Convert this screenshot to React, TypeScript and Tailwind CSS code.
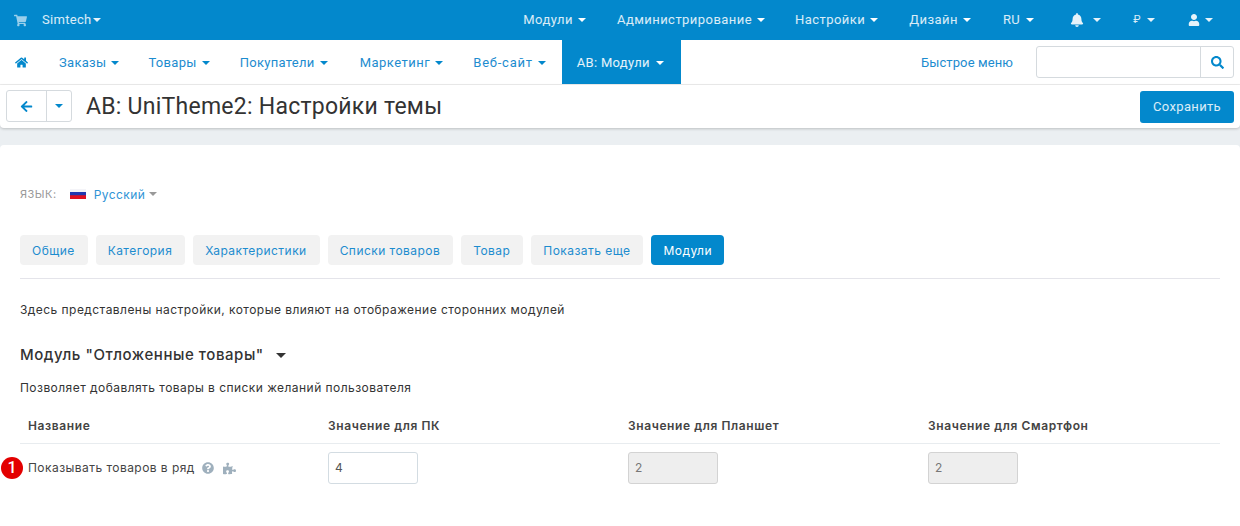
import { FaShoppingCart, FaHome, FaBell, FaUser, FaArrowLeft, FaSearch, FaQuestionCircle, FaPuzzlePiece } from 'react-icons/fa';

const Caret = ({ className = 'border-t-white' }: { className?: string }) => (
  <span className={`inline-block w-0 h-0 border-x-[4px] border-x-transparent border-t-[4px] ${className}`} />
);

const topItems = [
  { label: 'Модули', cls: 'gap-[5px]' },
  { label: 'Администрирование', cls: 'gap-[5px] ml-[31px]' },
  { label: 'Настройки', cls: 'gap-[5px] ml-[30px]' },
  { label: 'Дизайн', cls: 'gap-[5px] ml-[31px]' },
  { label: 'RU', cls: 'gap-[6px] ml-[32px]' },
];

const mainItems = [
  { label: 'Заказы', cls: 'ml-[31px]' },
  { label: 'Товары', cls: 'ml-[29px]' },
  { label: 'Покупатели', cls: 'ml-[30px]' },
  { label: 'Маркетинг', cls: 'ml-[32px] tracking-[0.5px]' },
  { label: 'Веб-сайт', cls: 'ml-[30px] tracking-[0.75px]' },
];
const tabs = ['Общие', 'Категория', 'Характеристики', 'Списки товаров', 'Товар', 'Показать еще'];
const columns = ['Значение для ПК', 'Значение для Планшет', 'Значение для Смартфон'];

export default function App() {
  return (
    <div className="w-[1240px] h-[526px] overflow-hidden bg-[#ebeff2] font-['Roboto',sans-serif]">
      {/* Top bar */}
      <div className="h-10 bg-[#0388cc] flex items-center text-[13px] text-white/85">
        <FaShoppingCart className="ml-[14px] text-[13px] text-white/60" />
        <span className="ml-[15px] tracking-[0.3px]">Simtech</span>
        <Caret className="border-t-white/90 ml-[1px]" />
        <div className="ml-auto flex items-center tracking-[0.45px]">
          {topItems.map(item => (
            <div key={item.label} className={`flex items-center ${item.cls}`}>
              {item.label}
              <Caret />
            </div>
          ))}
          <FaBell className="ml-[36px] text-[14px] text-white/90" />
          <Caret className="border-t-white/90 ml-[9px]" />
          <span className="ml-[32px] text-[11px]">₽</span>
          <Caret className="border-t-white/90 ml-[6px]" />
          <FaUser className="ml-[33px] text-[12px] text-white/90" />
          <Caret className="border-t-white/90 ml-[5px] mr-[27px]" />
        </div>
      </div>

      {/* Main nav */}
      <div className="h-[45px] bg-white border-b border-[#eeeeee] flex items-start text-[13px] text-[#1d8ccf] tracking-[0.3px]">
        <div className="h-11 pt-px flex items-center">
          <FaHome className="ml-[15px] text-[13px] text-[#0388cc]" />
          {mainItems.map(item => (
            <div key={item.label} className={`flex items-center gap-[5px] ${item.cls}`}>
              {item.label}
              <Caret className="border-t-[#0388cc]" />
            </div>
          ))}
        </div>
        <div className="ml-[16px] h-11 pt-px w-[119px] pl-[15px] bg-[#0388cc] text-white/90 flex items-center gap-[6px]">
          АВ: Модули
          <Caret />
        </div>
        <div className="ml-auto h-11 flex items-center pr-[6px]">
          <span className="pt-px tracking-[0.1px]">Быстрое меню</span>
          <div className="ml-[23px] w-[198px] h-8 border border-[#d5dade] rounded-[3px] flex justify-end">
            <div className="w-[33px] border-l border-[#d5dade] flex items-center justify-center">
              <FaSearch className="text-[13px] text-[#0388cc]" />
            </div>
          </div>
        </div>
      </div>

      {/* Title bar */}
      <div className="h-[43px] bg-white rounded-b-[4px] shadow-[0_1px_3px_rgba(0,0,0,0.2)] flex items-start pl-[6px] pr-[6px] relative">
        <div className="mt-[5px] h-8 w-[66px] flex border border-[#d5dade] rounded-[3px]">
          <div className="w-10 border-r border-[#d5dade] flex items-center justify-center">
            <FaArrowLeft className="text-[13px] text-[#0388cc]" />
          </div>
          <div className="flex-1 flex items-center justify-center">
            <Caret className="border-t-[#0388cc]" />
          </div>
        </div>
        <h1 className="ml-[14px] mt-[7px] text-[23px] leading-[30px] text-[#333] tracking-[0.25px]">
          AB: UniTheme2: Настройки темы
        </h1>
        <button className="ml-auto mt-[6px] w-[94px] h-8 bg-[#0388cc] rounded-[3px] text-[13px] text-white/85 tracking-[0.35px]">
          Сохранить
        </button>
      </div>

      {/* Content */}
      <div className="mt-[17px] h-[381px] bg-white rounded-t-[4px] px-5 font-['Inter',sans-serif] text-xs tracking-[0.45px] overflow-hidden">
        <div className="pt-[42px] h-[90px] flex items-start leading-[15px]">
          <span className="text-[#999] text-[11px] tracking-[0.5px]">ЯЗЫК:</span>
          <span className="ml-[13px] mt-[2px] w-4 h-[10px] bg-[linear-gradient(#f4f4f8_0%,#f4f4f8_30%,#2238b0_34%,#2238b0_62%,#e01020_66%,#e01020_100%)]" />
          <span className="ml-2 text-[#2f94d6]">Русский</span>
          <Caret className="border-t-[#999] ml-[4px] mt-[5px]" />
        </div>

        <div className="flex gap-2 pb-[13px] border-b border-[#e4e4ea]">
          {tabs.map(t => (
            <div key={t} className="h-[30px] pl-3 pr-[13px] pt-px flex items-center bg-[#f2f2f2] rounded-[4px] text-[#1d8ccf]">
              {t}
            </div>
          ))}
          <div className="h-[30px] px-3 pt-px flex items-center bg-[#0388cc] rounded-[4px] text-white">Модули</div>
        </div>

        <p className="mt-[22px] leading-[18px] text-[#333]">
          Здесь представлены настройки, которые влияют на отображение сторонних модулей
        </p>

        <div className="mt-[26px] flex items-center text-[15px] tracking-[0.55px] leading-5 font-medium text-[#333]">
          Модуль "Отложенные товары"
          <Caret className="border-t-[#333] ml-[12px] border-x-[5px] border-t-[5px]" />
        </div>

        <p className="mt-[14px] leading-[18px] text-[#333]">
          Позволяет добавлять товары в списки желаний пользователя
        </p>

        <div className="mt-[13px] grid grid-cols-[300px_300px_300px_300px] h-[34px] border-b border-[#e8ecef] font-semibold tracking-[0.6px] text-[#444] pl-2 items-start pt-[7px] leading-[18px]">
          <span>Название</span>
          {columns.map(c => (
            <span key={c}>{c}</span>
          ))}
        </div>

        <div className="grid grid-cols-[300px_300px_300px_300px] pl-2 mt-2 text-[#444] relative">
          <div className="absolute -left-[19px] top-[5px] w-[22px] h-[22px] rounded-full bg-[#e30000] text-white text-[16px] leading-[22px] text-center tracking-normal font-['Roboto',sans-serif] font-medium">
            1
          </div>
          <div className="flex items-center h-8">
            Показывать товаров в ряд
            <FaQuestionCircle className="ml-[7px] text-[12px] text-[#9fb0bd]" />
            <FaPuzzlePiece className="ml-[9px] text-[13px] text-[#9fb0bd]" />
          </div>
          <div className="w-[90px] h-8 border border-[#d3dce2] rounded-[3px] flex items-center px-[6px] text-[#555]">4</div>
          <div className="w-[90px] h-8 border border-[#d3d3d3] rounded-[3px] bg-[#eeeeee] flex items-center px-[6px] text-[#777]">2</div>
          <div className="w-[90px] h-8 border border-[#d3d3d3] rounded-[3px] bg-[#eeeeee] flex items-center px-[6px] text-[#777]">2</div>
        </div>
      </div>
    </div>
  );
}
